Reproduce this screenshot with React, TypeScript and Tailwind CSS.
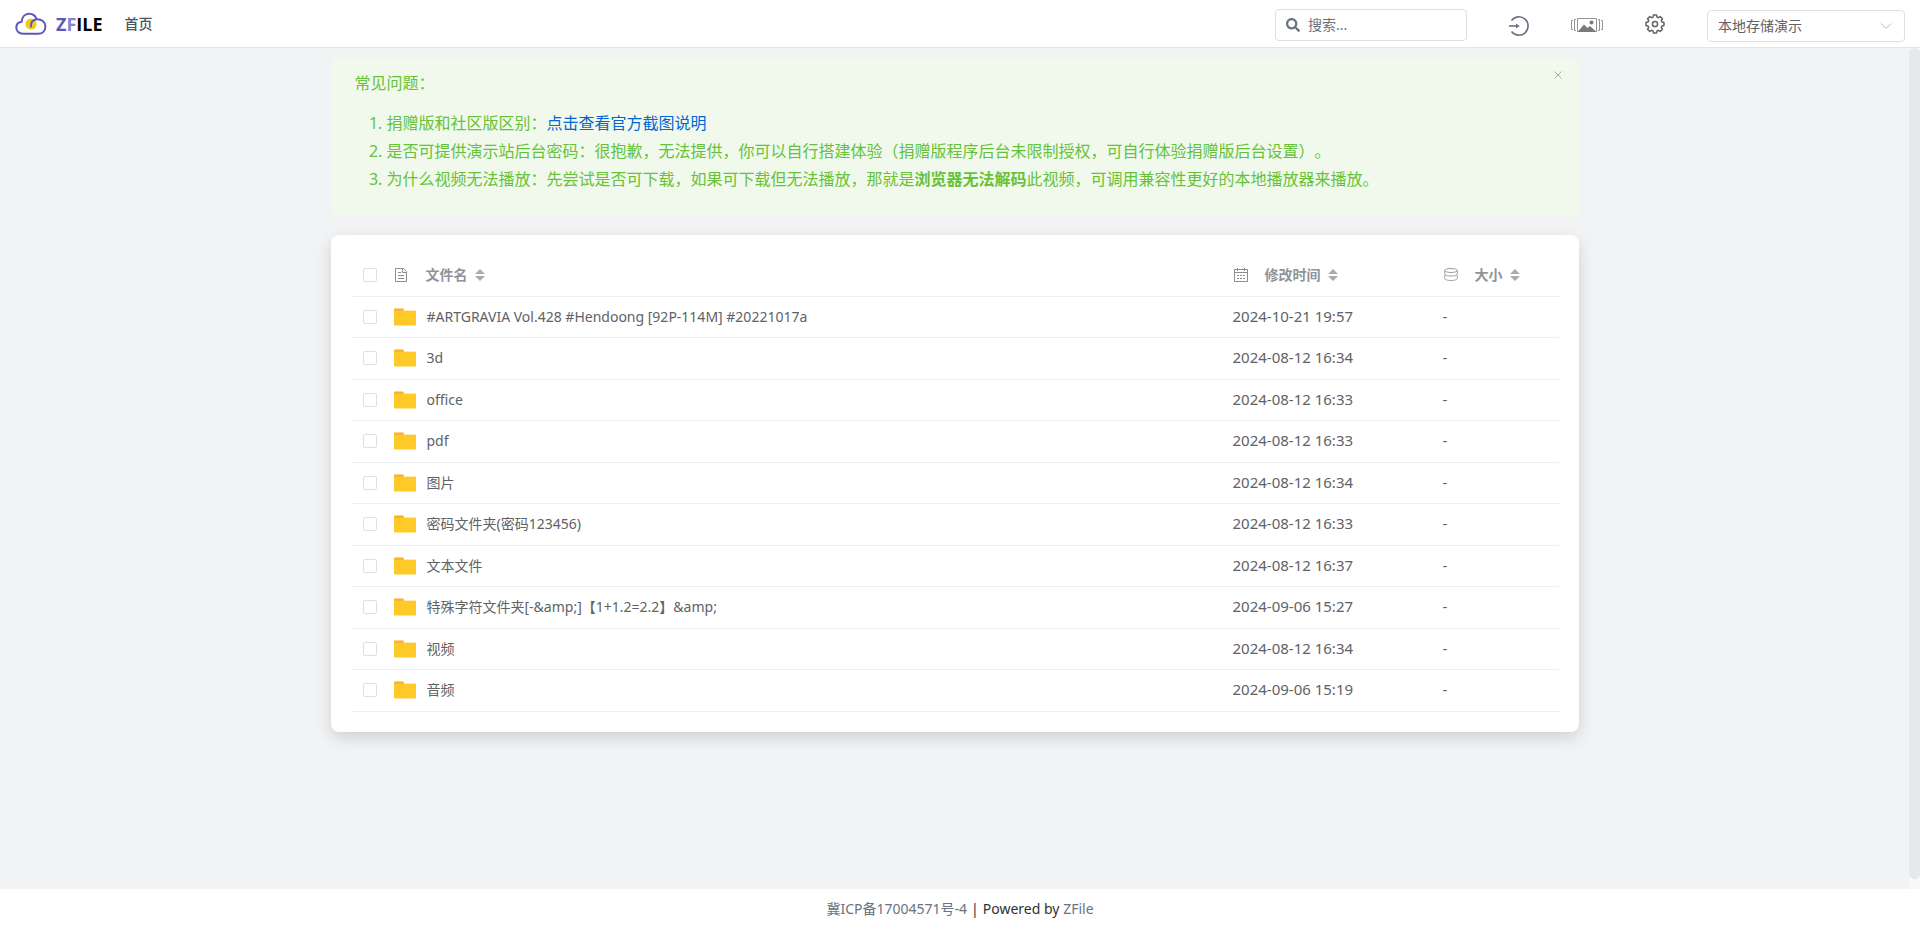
import { ReactNode } from 'react';

type Entry = { name: string; date: string };

const entries: Entry[] = [
  { name: '#ARTGRAVIA Vol.428 #Hendoong [92P-114M] #20221017a', date: '2024-10-21 19:57' },
  { name: '3d', date: '2024-08-12 16:34' },
  { name: 'office', date: '2024-08-12 16:33' },
  { name: 'pdf', date: '2024-08-12 16:33' },
  { name: '图片', date: '2024-08-12 16:34' },
  { name: '密码文件夹(密码123456)', date: '2024-08-12 16:33' },
  { name: '文本文件', date: '2024-08-12 16:37' },
  { name: '特殊字符文件夹[-&amp;]【1+1.2=2.2】&amp;', date: '2024-09-06 15:27' },
  { name: '视频', date: '2024-08-12 16:34' },
  { name: '音频', date: '2024-09-06 15:19' },
];

function Logo() {
  return (
    <svg className="h-6 w-8" viewBox="0 0 32 24" fill="none" aria-hidden="true">
      <circle cx="16" cy="12" r="5.6" fill="#f5cb16" />
      <path
        d="M8 21.8C4 21.8 1.300 19.200 1.300 15.600c0-3.200 2.200-5.400 5.400-5.800C7 5 9.900 1.800 14 1.800c3.700 0 6.600 2.200 7.500 5.500 4.900-.4 8.900 2.700 8.900 7.200 0 4.400-3 7.300-7.200 7.300Z"
        stroke="#5a58b8"
        strokeWidth="2"
        strokeLinejoin="round"
      />
      <path d="M21.500 7.300c-3.600.6-5.800 3.400-5.500 7.200" stroke="#5a58b8" strokeWidth="2" strokeLinecap="round" />
    </svg>
  );
}

function SearchIcon() {
  return (
    <svg className="h-[14px] w-[14px] shrink-0" viewBox="0 0 512 512" fill="#6b7280" aria-hidden="true">
      <path d="M505 442.700 405.300 343c-4.500-4.500-10.600-7-17-7H372c27.600-35.300 44-79.700 44-128C416 93.100 322.900 0 208 0S0 93.100 0 208s93.100 208 208 208c48.300 0 92.700-16.400 128-44v16.300c0 6.400 2.500 12.500 7 17l99.700 99.700c9.400 9.400 24.600 9.400 33.900 0l28.300-28.300c9.400-9.400 9.400-24.600.1-34zM208 336c-70.700 0-128-57.200-128-128 0-70.700 57.200-128 128-128 70.700 0 128 57.200 128 128 0 70.700-57.200 128-128 128z" />
    </svg>
  );
}

function LoginIcon() {
  return (
    <svg className="h-6 w-6" viewBox="0 0 24 24" fill="none" stroke="#6b7280" strokeWidth="1.600" aria-hidden="true">
      <path d="M4.500 7.500a9.200 9.200 0 1 1 0 11" />
      <path d="M2 13h9" />
      <path d="M9 10.500 12.800 13 9 15.500Z" fill="#6b7280" stroke="none" />
    </svg>
  );
}

function GalleryIcon() {
  return (
    <svg className="h-6 w-8" viewBox="0 0 32 24" fill="none" stroke="#959595" aria-hidden="true">
      <path d="M6.500 5.500h19v13h-19z" />
      <path d="M5 6.500H3.500v11H5M27 6.500h1.500v11H27M2 7.500H.5v9H2M30 7.500h1.500v9H30" />
      <path d="m6.500 19 6.500-7.500 3.500 3.500 2.500-2 6.500 6Z" fill="#7a7a7a" stroke="none" />
      <circle cx="20.500" cy="9.500" r="2" fill="#7a7a7a" stroke="none" />
    </svg>
  );
}

const gearOutline = Array.from({ length: 8 }, (_, tooth) =>
  [[-16, 7.2], [-10, 9.1], [10, 9.1], [16, 7.2]].map(([offset, radius]) => {
    const angle = ((tooth * 45 + offset) * Math.PI) / 180;
    return `${12 + radius * Math.cos(angle)},${12 + radius * Math.sin(angle)}`;
  }),
)
  .flat()
  .join(' ');

function GearIcon() {
  return (
    <svg className="h-6 w-6" viewBox="0 0 24 24" fill="none" stroke="#606266" strokeWidth="1.500" strokeLinejoin="round" aria-hidden="true">
      <polygon points={gearOutline} />
      <circle cx="12" cy="12" r="2.600" />
    </svg>
  );
}

function FolderIcon() {
  return (
    <svg className="h-[18px] w-[22px] shrink-0" viewBox="0 0 22 18" aria-hidden="true">
      <path d="M0 1.500C0 .7.500.5 1.200.5h7.300c.7 0 1.200.300 1.200 1V2H22v4H0Z" fill="#ffe9b8" />
      <path d="M0 1.500C0 .7.500.5 1.200.5h7.300c.7 0 1.200.300 1.200 1V5H0Z" fill="#ffb02c" />
      <path d="M0 3h22v13.500c0 .7-.4 1-1 1H1c-.6 0-1-.3-1-1Z" fill="#ffc928" />
    </svg>
  );
}

function FileIcon() {
  return (
    <svg className="h-4 w-4" viewBox="0 0 16 16" fill="none" stroke="#8b8d93" aria-hidden="true">
      <path d="M1.500 1.500h8l3 3v10h-11zM8.500 1.500v4h4M4 5.500h3M4 8.500h6M4 11.500h6" />
    </svg>
  );
}

function CalendarIcon() {
  return (
    <svg className="h-4 w-4" viewBox="0 0 16 16" fill="none" stroke="#8b8d93" aria-hidden="true">
      <path d="M1.500 2.500h13v12h-13zM1.500 5.500h13M4.500 1v3M11.500 1v3" />
      <path d="M4 8.500h8M4 11.500h8" strokeDasharray="2 1" />
    </svg>
  );
}

function CoinsIcon() {
  return (
    <svg className="h-4 w-4" viewBox="0 0 16 16" fill="none" stroke="#9a9ca1" aria-hidden="true">
      <ellipse cx="8" cy="3.500" rx="6.300" ry="2" />
      <path d="M1.700 3.500v3.300c0 1.300 2.500 2.200 6.300 2.200s6.300-.9 6.300-2.200V3.500" />
      <path d="M1.700 8v3.300c0 1.300 2.500 2.200 6.300 2.200s6.300-.9 6.300-2.200V8" />
    </svg>
  );
}

function SortHeader({ icon, label }: { icon: ReactNode; label: string }) {
  return (
    <button type="button" className="flex items-center">
      {icon}
      <span className="ml-4 text-sm font-bold">{label}</span>
      <svg className="ml-[7px] h-3 w-[10px]" viewBox="0 0 10 12" fill="#a8abb2" aria-hidden="true">
        <path d="M5 0l5 5H0ZM5 12l5-5H0Z" />
      </svg>
    </button>
  );
}

function Check({ label }: { label: string }) {
  return (
    <input
      type="checkbox"
      aria-label={label}
      className="block h-[14px] w-[14px] appearance-none rounded-xs border border-[#dcdfe6] bg-white checked:bg-[#409eff]"
    />
  );
}

export default function App() {
  return (
    <div className="flex min-h-screen flex-col bg-white font-['Noto_Sans','Noto_Sans_CJK_SC',sans-serif] text-sm text-[#606266]">
      <header className="flex h-12 items-center border-b border-[#e4e5e7] pr-[15px] pl-[15px]">
        <a href="#home" className="flex items-center gap-[9px]">
          <Logo />
          <span className="font-['Open_Sans',sans-serif] text-lg font-bold text-black">
            <span className="text-[#5a58b8]">Z</span>
            <span className="text-[#8582d2]">F</span>ILE
          </span>
        </a>
        <a href="#home" className="ml-[22px] font-medium text-[#4b5563]">首页</a>
        <div className="ml-auto flex items-center">
          <label className="mt-[2px] flex h-8 w-48 items-center gap-2 rounded-sm border border-[#dcdfe6] px-[10px]">
            <SearchIcon />
            <input type="text" placeholder="搜索..." aria-label="搜索" className="w-full min-w-0 outline-none placeholder:text-[#6b7280]" />
          </label>
          <button type="button" aria-label="登录" className="mt-[2px] ml-10"><LoginIcon /></button>
          <button type="button" aria-label="图集模式" className="mt-[2px] ml-10"><GalleryIcon /></button>
          <button type="button" aria-label="设置" className="ml-10"><GearIcon /></button>
          <div className="mt-1 ml-10 flex items-center rounded-sm border border-[#dcdfe6] pr-3">
            <select aria-label="存储源" className="h-[30px] w-43 appearance-none pl-[10px] outline-none">
              <option>本地存储演示</option>
            </select>
            <svg className="h-3 w-3" viewBox="0 0 12 12" fill="none" stroke="#b4b8bf" aria-hidden="true">
              <path d="m1 3.500 5 5 5-5" />
            </svg>
          </div>
        </div>
      </header>

      <div className="flex flex-1 bg-[#f2f3f5]">
        <main className="flex-1">
          <div className="mx-auto max-w-[1248px] pt-[10px]">
            <section className="flex items-start justify-between rounded-sm bg-[#f0f9eb] pt-[11px] pr-4 pb-[22px] pl-6 text-base/7 text-[#67c23a] [text-spacing-trim:space-all]">
              <div>
                <p>常见问题：</p>
                <ol className="mt-3 list-decimal pl-8">
                  <li>
                    捐赠版和社区版区别：<a href="#compare" className="text-[#0366d6]">点击查看官方截图说明</a>
                  </li>
                  <li>是否可提供演示站后台密码：很抱歉，无法提供，你可以自行搭建体验（捐赠版程序后台未限制授权，可自行体验捐赠版后台设置）。</li>
                  <li>
                    为什么视频无法播放：先尝试是否可下载，如果可下载但无法播放，那就是<strong>浏览器无法解码</strong>此视频，可调用兼容性更好的本地播放器来播放。
                  </li>
                </ol>
              </div>
              <button type="button" aria-label="关闭">
                <svg className="h-3 w-[10px]" viewBox="0 0 10 12" fill="none" stroke="#a8abb2" aria-hidden="true">
                  <path d="m1.500 2.500 7 7m0-7-7 7" />
                </svg>
              </button>
            </section>

            <section className="mt-5 rounded-lg bg-white p-5 shadow-[0_6px_16px_rgba(0,0,0,0.14)]">
              <table className="w-full table-fixed">
                <colgroup>
                  <col className="w-8" />
                  <col />
                  <col className="w-[210px]" />
                  <col className="w-[116px]" />
                </colgroup>
                <thead>
                  <tr className="h-[41px] border-b border-[#ebeef5] text-left text-[#909399]">
                    <th className="pl-3"><Check label="全选" /></th>
                    <th className="pl-[11px]"><SortHeader icon={<FileIcon />} label="文件名" /></th>
                    <th><SortHeader icon={<CalendarIcon />} label="修改时间" /></th>
                    <th><SortHeader icon={<CoinsIcon />} label="大小" /></th>
                  </tr>
                </thead>
                <tbody>
                  {entries.map((entry) => (
                    <tr key={entry.name} className="h-[41px] border-b border-[#ebeef5] even:h-[42px]">
                      <td className="pl-3"><Check label={entry.name} /></td>
                      <td className="pl-[11px]">
                        <a href="#folder" className="flex items-center gap-[11px]">
                          <FolderIcon />
                          {entry.name}
                        </a>
                      </td>
                      <td className="text-[15px]">{entry.date}</td>
                      <td className="text-[15px]">-</td>
                    </tr>
                  ))}
                </tbody>
              </table>
            </section>
          </div>
        </main>
        <div className="w-[11px] bg-[#f7f8fa] pb-[10px]" aria-hidden="true">
          <div className="h-full rounded-full bg-[#e5e9ec]" />
        </div>
      </div>

      <footer className="flex h-10 items-center justify-center gap-1 text-[#303133]">
        <a href="#icp" className="text-[#6b7280]">冀ICP备17004571号-4</a>
        <span>|</span>
        <span>Powered by <a href="#zfile" className="text-[#6b7280]">ZFile</a></span>
      </footer>
    </div>
  );
}
